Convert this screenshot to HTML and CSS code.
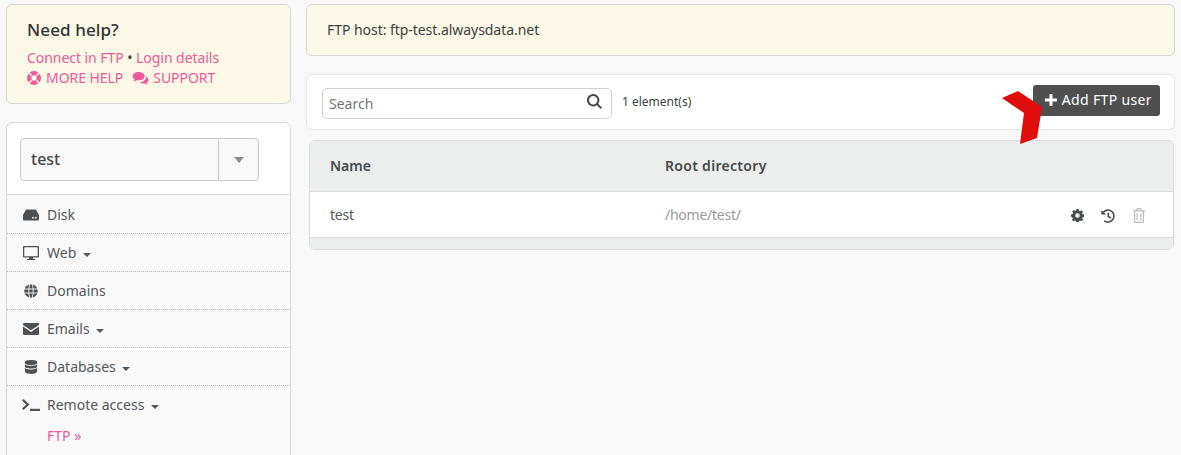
FILE: index.html
```html
<!DOCTYPE html>
<html lang="en">
<head>
<meta charset="utf-8">
<title>FTP</title>
<link rel="stylesheet" href="styles.css">
</head>
<body>
<div class="page">
  <aside class="sidebar">
    <section class="help">
      <h2>Need help?</h2>
      <p class="help-line"><a>Connect in FTP</a> <span class="dot">•</span> <a>Login details</a></p>
      <p class="help-links">
        <a class="help-link"><svg class="ic-help" viewBox="0 0 14 14"><path fill-rule="evenodd" d="M7 0a7 7 0 1 1 0 14A7 7 0 0 1 7 0zM7 4.300a2.700 2.700 0 1 0 0 5.400 2.700 2.700 0 0 0 0-5.400zM2.700 1.500 1.500 2.700 4 5.100 5.100 4zM11.300 1.500 8.900 4 10 5.100 12.500 2.700zM4 8.900 1.500 11.300 2.700 12.500 5.100 10zM10 8.900 8.900 10 11.300 12.500 12.500 11.300z"/></svg>MORE HELP</a>
        <a class="help-link"><svg class="ic-chat" viewBox="0 0 18 15"><path d="M7 1C3.400 1 .5 3 .5 5.600c0 1.400.9 2.700 2.200 3.500-.2.800-.7 1.500-1.300 2.100 1.300-.1 2.500-.7 3.500-1.400.7.1 1.400.2 2.100.2 3.600 0 6.500-2 6.500-4.400C13.500 3 10.600 1 7 1z"/><path d="M15 5.500c.1.300.1.600.1.900 0 3-3 5.300-7 5.500 1 1 2.500 1.600 4.200 1.600.5 0 1-.1 1.500-.2.800.6 1.800 1.100 2.900 1.200-.5-.5-.9-1.100-1.100-1.800 1.200-.7 1.900-1.800 1.900-3 0-1.700-1-3.200-2.500-4.200z"/></svg>SUPPORT</a>
      </p>
    </section>
    <nav class="menu">
      <div class="account-box">
        <div class="account"><span class="account-name">test</span><span class="account-toggle"><i class="caret-lg"></i></span></div>
      </div>
      <ul class="nav">
        <li><svg class="nav-ic" viewBox="0 0 16 14"><path fill-rule="evenodd" d="M4 1.500h8c.6 0 1.100.3 1.400.8L16 7v4.500a1 1 0 0 1-1 1H1a1 1 0 0 1-1-1V7l2.600-4.700c.3-.5.8-.8 1.400-.8zM9.900 8.800a.9.9 0 1 0 0 1.800.9.9 0 0 0 0-1.800zM12.900 8.800a.9.9 0 1 0 0 1.800.9.9 0 0 0 0-1.800z"/></svg><span>Disk</span></li>
        <li><svg class="nav-ic" viewBox="0 0 16 14"><path fill-rule="evenodd" d="M1 0h14a1 1 0 0 1 1 1v9.500a1 1 0 0 1-1 1h-5V13h2v1H4v-1h2v-1.500H1a1 1 0 0 1-1-1V1a1 1 0 0 1 1-1zM1.300 1.300v8.900h13.400V1.300z"/></svg><span>Web</span><i class="caret"></i></li>
        <li><svg class="nav-ic" viewBox="0 0 14 14"><circle cx="7" cy="7" r="6.800"/><path class="globe-lines" d="M0 5h14M0 9h14M5.800 0C4.500 4 4.500 10 5.800 14M8.200 0c1.300 4 1.300 10 0 14"/></svg><span>Domains</span></li>
        <li><svg class="nav-ic" viewBox="0 0 16 12"><path d="M1.200 0h13.600A1.200 1.200 0 0 1 16 1.200c0 .5-.3.900-.7 1.200L8 7.300.7 2.400C.3 2.100 0 1.700 0 1.200A1.200 1.200 0 0 1 1.200 0z"/><path d="M0 3.600 8 9l8-5.400v7.200A1.200 1.200 0 0 1 14.800 12H1.200A1.200 1.200 0 0 1 0 10.800z"/></svg><span>Emails</span><i class="caret"></i></li>
        <li><svg class="nav-ic" viewBox="0 0 14 16"><path d="M7 0c3.900 0 7 1 7 2.300v1C14 4.600 10.900 5.600 7 5.600S0 4.600 0 3.300v-1C0 1 3.100 0 7 0z"/><path d="M0 5c1.500 1.100 4.200 1.700 7 1.700S12.500 6.100 14 5v2.500c0 1.300-3.100 2.300-7 2.300S0 8.800 0 7.500z"/><path d="M0 9.200c1.500 1.100 4.200 1.700 7 1.700s5.500-.6 7-1.700v3.500C14 15 10.900 16 7 16S0 15 0 12.700z"/></svg><span>Databases</span><i class="caret"></i></li>
        <li class="open"><svg class="nav-ic nav-term" viewBox="0 0 18 12"><path d="M0 1.500 1.500 0 7.500 5.500 1.500 11 0 9.500 4.200 5.500z"/><rect x="8" y="9.800" width="10" height="2.200"/></svg><span>Remote access</span><i class="caret"></i></li>
        <li class="sub"><a>FTP »</a></li>
      </ul>
    </nav>
  </aside>
  <main class="main">
    <div class="notice">FTP host: ftp-test.alwaysdata.net</div>
    <div class="toolbar">
      <label class="search"><span class="placeholder">Search</span><svg class="ic-search" viewBox="0 0 15 15"><path fill-rule="evenodd" d="M6.200 0a6.200 6.200 0 0 1 5 9.800l3.400 3.400a1 1 0 0 1-1.400 1.400l-3.400-3.400A6.200 6.200 0 1 1 6.200 0zm0 2a4.200 4.200 0 1 0 0 8.400 4.200 4.200 0 0 0 0-8.400z"/></svg></label>
      <span class="count">1 element(s)</span>
      <span class="add-wrap">
        <a class="btn-add"><svg class="ic-plus" viewBox="0 0 12 12"><path d="M4.500 0h3v4.500H12v3H7.500V12h-3V7.500H0v-3h4.500z"/></svg>Add FTP user</a>
        <svg class="pointer" viewBox="0 0 40 54"><path d="M0 8 16 1 40 17 35 48 18 54 22 23z"/></svg>
      </span>
    </div>
    <div class="table">
      <div class="row head"><span class="c-name">Name</span><span class="c-dir">Root directory</span></div>
      <div class="row body"><span class="c-name c-name-val">test</span><span class="c-dir muted">/home/test/</span>
        <span class="actions">
          <svg class="act act-gear" viewBox="0 0 14 14"><path fill-rule="evenodd" d="M5.800 0h2.400l.4 1.800 1.100.5 1.600-1 1.700 1.700-1 1.600.5 1.100 1.800.4v2.400l-1.800.4-.5 1.100 1 1.600-1.700 1.700-1.600-1-1.100.5-.4 1.800H5.800l-.4-1.800-1.100-.5-1.600 1L1 11.900l1-1.600-.5-1.100L0 8.200V5.800l1.800-.4.500-1.100-1-1.600L3 1l1.600 1 1.100-.5zM7 4.600a2.400 2.400 0 1 0 0 4.800 2.400 2.400 0 0 0 0-4.800z"/></svg>
          <svg class="act act-hist" viewBox="0 0 14 14"><path class="hist-arc" d="M2.300 3.200A6 6 0 1 1 3.200 11.800"/><path d="M.3 .9V5.600H5z"/><path class="hist-hand" d="M7.300 3.800V7.500L9.800 9"/></svg>
          <svg class="act act-del" viewBox="0 0 12 15"><path fill-rule="evenodd" d="M4 0h4l1 2.200h3v1.200h-1v10.400a1.200 1.200 0 0 1-1.200 1.200H2.200A1.200 1.200 0 0 1 1 13.800V3.400H0V2.200h3zM4.600 1.200 4.200 2.200h3.600l-.4-1zM2.200 3.400v10.400h7.600V3.400zM3.600 5h1.100v7.300H3.600zM7.300 5h1.100v7.300H7.300z"/></svg>
        </span>
      </div>
      <div class="foot"></div>
    </div>
  </main>
</div>
</body>
</html>
```
FILE: styles.css
```css
* { box-sizing: border-box; }
html, body { margin: 0; height: 455px; overflow: hidden; }
body { background: #f8f8f8; color: #3b3f42; font: 14px/20px "Noto Sans", sans-serif; }
a { color: #ef5a9d; }
h2, p, ul { margin: 0; padding: 0; }
.page { display: flex; align-items: flex-start; gap: 15px; padding: 4px 6px 0; }
.sidebar { width: 285px; flex: none; display: flex; flex-direction: column; gap: 18px; }
.help { height: 100px; padding: 13px 20px; background: #fbf8e5; border: 1px solid #d8d8d8; border-radius: 6px; }
.help h2 { font-size: 17px; line-height: 24px; font-weight: 500; color: #2f3437; margin-bottom: 6px; letter-spacing: .1px; }
.help p { line-height: 20px; }
.help-line { letter-spacing: -.05px; }
.dot { color: #3b3f42; }
.help-links { display: flex; gap: 9px; letter-spacing: -.05px; }
.help-link { display: inline-flex; align-items: center; }
.ic-help { width: 14px; height: 14px; fill: #ef5a9d; margin-right: 5px; }
.ic-chat { width: 17px; height: 14px; fill: #ef5a9d; margin-right: 4px; }
.menu { height: 340px; background: #f9f9f9; border: 1px solid #d8d8d8; border-radius: 6px 6px 0 0; }
.account-box { height: 72px; padding: 15px 13px 0; background: #fff; border-bottom: 1px solid #d8d8d8; border-radius: 6px 6px 0 0; }
.account { display: flex; width: 239px; height: 43px; background: #f8f8f8; border: 1px solid #c8c8c8; border-radius: 4px; }
.account-name { flex: 1; padding-left: 10px; line-height: 40px; font-size: 16px; font-weight: 500; color: #45494c; }
.account-toggle { width: 40px; display: flex; align-items: center; justify-content: center; border-left: 1px solid #c8c8c8; }
.caret-lg { border: 5px solid transparent; border-top: 6px solid #8d8d8d; border-bottom: 0; }
.nav { list-style: none; }
.nav li { height: 38px; display: flex; align-items: center; padding-left: 16px; color: #54585b; border-bottom: 1px dotted #bdbdbd; position: relative; }
.nav li:first-child { height: 39px; padding-top: 1px; }
.nav li span { margin-left: 40px; position: absolute; left: 0; }
.nav-ic { width: 16px; height: 14px; fill: #4e5154; }
.globe-lines { fill: none; stroke: #f9f9f9; stroke-width: .9; }
.nav-term { width: 18px; height: 12px; margin-left: -1px; }
.caret { position: absolute; top: 19px; border: 4px solid transparent; border-top: 4px solid #55585b; border-bottom: 0; }
.nav li:nth-child(2) .caret { left: 76px; }
.nav li:nth-child(4) .caret { left: 89px; }
.nav li:nth-child(5) .caret { left: 115px; }
.nav li:nth-child(6) .caret { left: 144px; }
.nav li.open { border-bottom: 0; height: 37px; }
.nav li.sub { height: 26px; padding-left: 40px; border-bottom: 0; }
.main { flex: 1; min-width: 0; }
.notice { height: 52px; padding: 15px 20px; background: #fbf8e5; border: 1px solid #d8d8d8; border-radius: 6px; color: #3b3f42; letter-spacing: -.05px; }
.toolbar { margin-top: 18px; height: 56px; display: flex; align-items: center; padding: 0 14px 0 15px; background: #fff; border: 1px solid #e4e4e4; border-radius: 6px; }
.search { width: 290px; height: 31px; margin-top: 2px; padding: 2px 6px 0; display: flex; align-items: center; justify-content: space-between; border: 1px solid #cfcfcf; border-radius: 5px; }
.placeholder { color: #74787b; }
.ic-search { width: 15px; height: 15px; fill: #45494c; margin: 0 3px 6px 0; }
.count { margin-left: 10px; font-size: 12px; color: #3b3f42; }
.add-wrap { margin: 0 0 4px auto; position: relative; }
.btn-add { display: flex; align-items: center; height: 31px; padding: 0 8px 0 12px; background: #4f4f4f; color: #fff; border-radius: 3px; font-size: 14px; letter-spacing: .35px; }
.ic-plus { width: 12px; height: 12px; fill: #fff; margin-right: 5px; }
.pointer { position: absolute; left: -31px; top: 5px; width: 40px; height: 54px; fill: #e00b0b; z-index: 2; }
.table { margin: 10px 1px 0 3px; border: 1px solid #dcdcdc; border-radius: 6px; background: #fff; overflow: hidden; }
.row { display: flex; align-items: center; position: relative; padding-left: 20px; }
.head { height: 51px; background: #eceeee; border-bottom: 1px solid #dcdcdc; font-weight: 600; color: #45494c; }
.head .c-dir { letter-spacing: .3px; }
.body { height: 45px; color: #54585b; }
.c-name { width: 335px; }
.c-name-val { letter-spacing: -.2px; }
.muted { color: #999; letter-spacing: -.25px; }
.actions { position: absolute; right: 28px; top: 16px; display: flex; gap: 17px; align-items: center; }
.act { display: block; fill: #4a4d50; }
.act-gear { width: 13px; height: 13px; }
.act-hist { width: 14px; height: 14px; }
.hist-arc, .hist-hand { fill: none; stroke: #4a4d50; stroke-width: 1.6; }
.act-del { width: 12px; height: 15px; fill: #bbb; margin-left: 1px; }
.foot { height: 12px; background: #eceeee; border-top: 1px solid #dcdcdc; }
```
